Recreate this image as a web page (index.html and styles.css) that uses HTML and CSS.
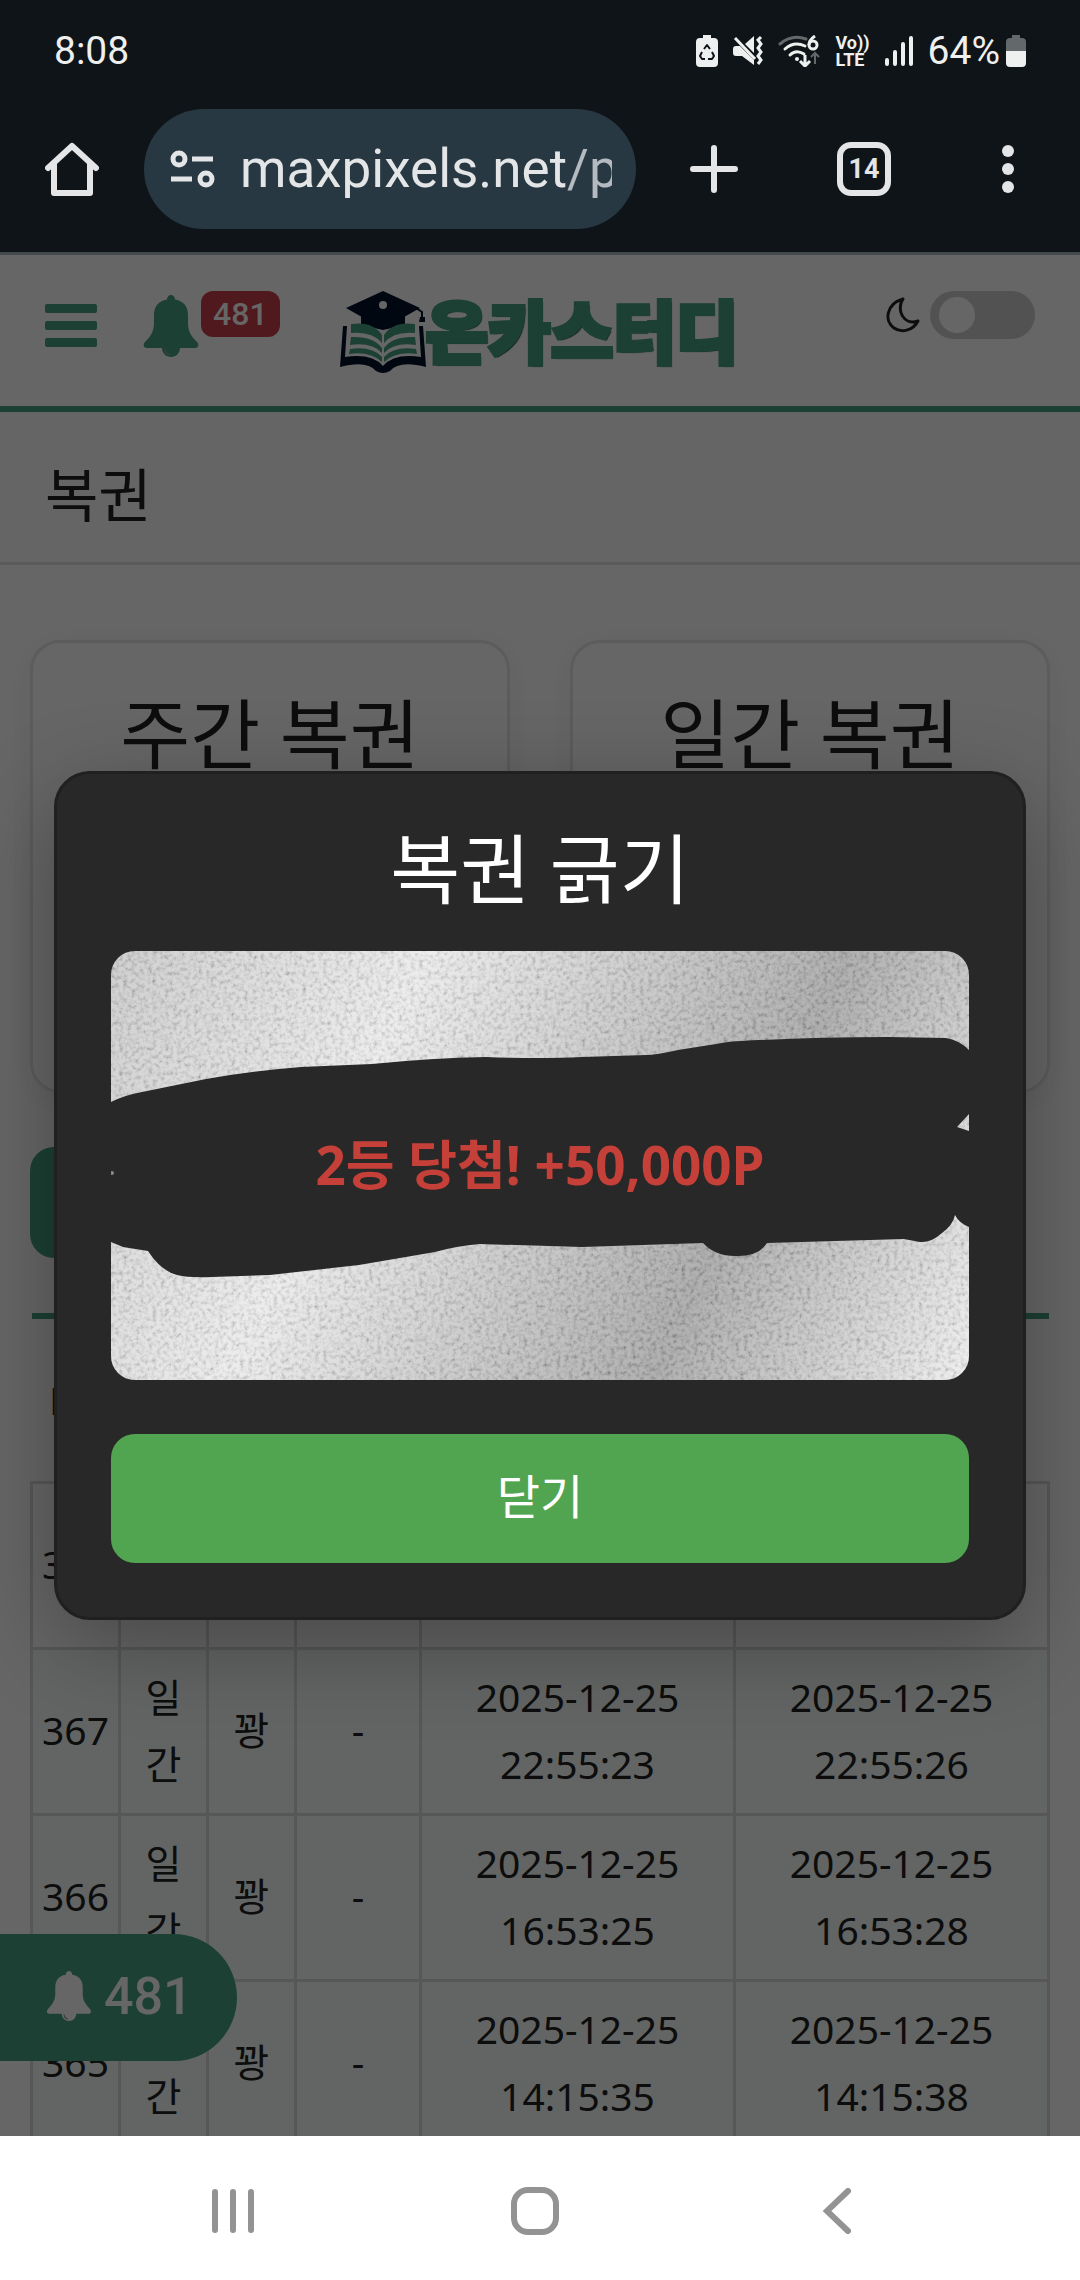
FILE: index.html
```html
<!DOCTYPE html>
<html lang="ko">
<head>
    <meta charset="UTF-8">
    <meta name="viewport" content="width=device-width, initial-scale=1.0">
    <title>복권</title>
    <link rel="stylesheet" href="styles.css">
</head>
<body>
    <svg class="sprite" aria-hidden="true">
        <symbol id="bell" viewBox="0 0 56 62">
            <path fill="currentColor" d="M28 0c2 0 4 1.500 4 4.500C41 6 45 12 45 20v8c0 9 4 14 9 19 2 2 2 6-2 6H37c0 5-4 9-9 9s-9-4-9-9H4c-4 0-4-4-2-6 5-5 9-10 9-19v-8c0-8 4-14 13-15.500C24 1.500 26 0 28 0z"/>
            <path class="bell-shine" d="M22 54c0 3 2 5 5 5.500" fill="none" stroke-width="1.500"/>
        </symbol>
    </svg>

    <!-- phone status bar -->
    <div class="status-bar">
        <span class="clock">8:08</span>
        <div class="status-icons">
            <svg width="22" height="32" viewBox="0 0 22 32">
                <path fill="#eef0ef" d="M7 0h8v3h3a4 4 0 0 1 4 4v21a4 4 0 0 1-4 4H4a4 4 0 0 1-4-4V7a4 4 0 0 1 4-4h3z"/>
                <path d="M8 14l3-4 3 4M16 17l2 4-2 3h-4M9 24H6l-2-3 2-4" fill="none" stroke="#0f1418" stroke-width="2" stroke-linejoin="round"/>
            </svg>
            <svg width="30" height="32" viewBox="0 0 30 32">
                <path fill="#eef0ef" d="M0 14q0-3 3-3h4l14 14v5L9 21H3q-3 0-3-3zM12 9l9-8v17z"/>
                <path d="M2 3l20 21M28 2l-3 3 3 4-3 4 3 4-3 4 3 4-3 4" fill="none" stroke="#eef0ef" stroke-width="3"/>
            </svg>
            <svg width="42" height="32" viewBox="0 0 42 32" fill="none">
                <path d="M2 9Q14-1 28 4" stroke="#63686b" stroke-width="3" stroke-linecap="round"/>
                <path d="M7 14q9-8 20-3M12 20q6-6 14-1" stroke="#eef0ef" stroke-width="3" stroke-linecap="round"/>
                <circle cx="19" cy="24" r="2" fill="#eef0ef"/>
                <path d="M27 20v10M22 26l5 5 5-5" stroke="#eef0ef" stroke-width="3"/>
                <path d="M37 29V18M33 22l4-4 4 4" stroke="#63686b" stroke-width="2"/>
                <path d="M37 1q-6 4-6 9" stroke="#eef0ef" stroke-width="3"/>
                <circle cx="35" cy="10" r="4" stroke="#eef0ef" stroke-width="3"/>
            </svg>
            <span class="volte">Vo))<br>LTE</span>
            <svg width="28" height="30" viewBox="0 0 28 30">
                <path d="M2 24v4M10 16v12M18 8v20M26 2v26" stroke="#eef0ef" stroke-width="4" stroke-linecap="round"/>
            </svg>
            <span class="percent">64%</span>
            <svg class="battery" width="20" height="32" viewBox="0 0 20 32">
                <path fill="#63686b" d="M6 0h8v3h2a4 4 0 0 1 4 4v9H0V7a4 4 0 0 1 4-4h2z"/>
                <path fill="#eef0ef" d="M0 16h20v12a4 4 0 0 1-4 4H4a4 4 0 0 1-4-4z"/>
            </svg>
        </div>
    </div>

    <!-- browser toolbar -->
    <nav class="toolbar">
        <button class="tool-btn" aria-label="홈">
            <svg width="54" height="54" viewBox="0 0 54 54" fill="none" stroke="#e3e5e7" stroke-width="6" stroke-linejoin="round" stroke-linecap="round">
                <path d="M3 26L27 4l24 22M9 22v29h36V22"/>
            </svg>
        </button>
        <div class="address">
            <svg width="46" height="38" viewBox="0 0 46 38" fill="none" stroke="#e3e5e7" stroke-width="5">
                <circle cx="9" cy="9" r="6"/><path d="M22 9h21M1 29h21"/><circle cx="36" cy="29" r="6"/>
            </svg>
            <a href="#" class="url">maxpixels.net<span>/p</span></a>
        </div>
        <button class="tool-btn plus" aria-label="새 탭">
            <svg width="48" height="48" viewBox="0 0 48 48" stroke="#e3e5e7" stroke-width="6" stroke-linecap="round">
                <path d="M24 3v42M3 24h42"/>
            </svg>
        </button>
        <button class="tool-btn tabs">14</button>
        <button class="tool-btn more" aria-label="메뉴">
            <svg width="12" height="48" viewBox="0 0 12 48" fill="#e3e5e7">
                <circle cx="6" cy="6" r="6"/><circle cx="6" cy="24" r="6"/><circle cx="6" cy="42" r="6"/>
            </svg>
        </button>
    </nav>

    <div class="page">
        <header class="site-header">
            <button class="menu-btn" aria-label="메뉴 열기"><i></i><i></i><i></i></button>
            <a href="#" class="alarm" aria-label="알림">
                <svg class="bell" width="56" height="62"><use href="#bell"/></svg>
                <span class="badge">481</span>
            </a>
            <a href="#" class="logo">
                <svg width="86" height="82" viewBox="0 0 86 82">
                    <path fill="#001228" d="M6 17L43 0l37 17-37 21zM21 24l22 12 22-12v10L43 39 21 34z"/>
                    <path d="M76 17l6 4v8" fill="none" stroke="#001228" stroke-width="2"/>
                    <path fill="#001228" d="M80 26h5v5h-6zM3 35h4L5 66q27-4 38 9 11-13 38-9l-2-31h4l3 41q-27-7-36 4-7 4-14 0Q27 69 0 76z"/>
                    <circle cx="43" cy="14" r="4" fill="#fff"/>
                    <g fill="#46a080">
                        <path d="M11 33q22-3 31 11v8Q32 40 11 42z"/>
                        <path d="M11 46q22-1 31 11v5Q32 51 10 54z"/>
                        <path d="M10 58q22-3 32 8v5Q30 60 9 63z"/>
                        <path d="M75 33q-22-3-31 11v8q10-12 31-10z"/>
                        <path d="M75 46q-22-1-31 11v5q10-11 32-8z"/>
                        <path d="M76 58q-22-3-32 8v5q12-11 33-8z"/>
                    </g>
                </svg>
                <span>온카스터디</span>
            </a>
            <div class="theme">
                <svg width="34" height="36" viewBox="0 0 34 36" fill="none" stroke="#222" stroke-width="3" stroke-linejoin="round">
                    <path d="M17 2C10 12 17 29 32 24 27 34 15 36 8 31-2 24 0 7 17 2z"/>
                </svg>
                <input type="checkbox" class="switch" aria-label="다크 모드">
            </div>
        </header>

        <h2 class="page-title">복권</h2>

        <main>
            <div class="cards">
                <section class="card"><h3>주간 복권</h3></section>
                <section class="card"><h3>일간 복권</h3></section>
            </div>
            <button class="filter-btn" aria-label="기록"></button>
            <table>
                <colgroup>
                    <col class="c-s"><col class="c-s"><col class="c-s"><col class="c-m"><col class="c-l"><col class="c-l">
                </colgroup>
                <thead>
                    <tr><th>No</th><th></th><th></th><th></th><th></th><th></th></tr>
                </thead>
                <tbody>
                    <tr class="win">
                        <td>368</td><td></td><td></td><td></td><td></td><td></td>
                    </tr>
                    <tr>
                        <td>367</td><td>일간</td><td>꽝</td><td>-</td>
                        <td>2025-12-25 22:55:23</td><td>2025-12-25 22:55:26</td>
                    </tr>
                    <tr>
                        <td>366</td><td>일간</td><td>꽝</td><td>-</td>
                        <td>2025-12-25 16:53:25</td><td>2025-12-25 16:53:28</td>
                    </tr>
                    <tr>
                        <td>365</td><td>일간</td><td>꽝</td><td>-</td>
                        <td>2025-12-25 14:15:35</td><td>2025-12-25 14:15:38</td>
                    </tr>
                </tbody>
            </table>
        </main>

        <a href="#" class="float-alarm">
            <svg class="bell" width="46" height="50"><use href="#bell"/></svg>
            <span>481</span>
        </a>

        <div class="overlay">
            <div class="modal" role="dialog" aria-labelledby="scratchTitle">
                <h2 id="scratchTitle">복권 긁기</h2>
                <div class="scratch">
                    <svg viewBox="0 0 858 429" preserveAspectRatio="none" aria-hidden="true">
                        <defs>
                            <linearGradient id="silver" gradientUnits="userSpaceOnUse" x1="0" y1="0" x2="871" y2="402">
                                <stop offset="0" stop-color="#bdbdbd"/>
                                <stop offset="0.3" stop-color="#e6e6e6"/>
                                <stop offset="0.7" stop-color="#929292"/>
                                <stop offset="1" stop-color="#eaeaea"/>
                            </linearGradient>
                            <filter id="grain" x="0" y="0" width="1" height="1">
                                <feTurbulence type="fractalNoise" baseFrequency="0.24" numOctaves="3" seed="4"/>
                                <feColorMatrix values="2 0 0 0 -0.22  2 0 0 0 -0.22  2 0 0 0 -0.22  0 0 0 0 0.28"/>
                            </filter>
                        </defs>
                        <rect width="858" height="429" fill="url(#silver)"/>
                        <rect width="858" height="429" filter="url(#grain)"/>
                        <!-- scratched area -->
                        <path fill="#282828" d="M0 151Q14 144 31 141L95 128Q140 120 190 116L261 113Q320 107 375 106Q430 108 471 106L535 104Q545 104 567 99L605 93Q620 90 630 90Q700 86 777 86L835 87Q848 89 858 99V163L846 176L858 180V276Q848 272 844 264Q842 274 831 282Q820 292 809 291L793 288L656 292Q648 305 627 305Q605 306 592 292L471 296L369 293Q345 295 324 301L248 314L159 324L101 326Q78 327 66 324Q50 320 37 300L12 296L0 291Z"/>
                        <circle cx="1" cy="222" r="2" fill="#888"/>
                    </svg>
                    <strong>2등 당첨! +50,000P</strong>
                </div>
                <button class="close-btn">닫기</button>
            </div>
        </div>
    </div>

    <!-- system navigation -->
    <nav class="nav-bar">
        <button aria-label="최근 앱">
            <svg width="42" height="46" viewBox="0 0 42 46" stroke="#939393" stroke-width="6" stroke-linecap="round"><path d="M3 4v38M21 4v38M39 4v38"/></svg>
        </button>
        <button aria-label="홈 화면">
            <svg width="48" height="48" viewBox="0 0 48 48" fill="none" stroke="#939393" stroke-width="6"><rect x="3" y="3" width="42" height="42" rx="14"/></svg>
        </button>
        <button aria-label="뒤로">
            <svg width="46" height="46" viewBox="0 0 46 46" fill="none" stroke="#939393" stroke-width="6" stroke-linecap="round"><path d="M34 3L13 23l21 20"/></svg>
        </button>
    </nav>
</body>
</html>
```

FILE: styles.css
```css
* {
    box-sizing: border-box;
}
body {
    margin: 0;
    height: 100vh;
    display: flex;
    flex-direction: column;
    overflow: hidden;
    background: #0f1418;
    color: #222;
    font-family: "Noto Sans", "Noto Sans CJK KR", sans-serif;
    font-size: 39px;
}
button {
    border: none;
    padding: 0;
    background: none;
    font-family: inherit;
    cursor: pointer;
}
a {
    color: inherit;
    text-decoration: none;
}
svg {
    display: block;
    flex-shrink: 0;
}
h2, h3 {
    margin: 0;
    font-weight: 400;
}
.sprite {
    position: absolute;
    width: 0;
    height: 0;
}

/* Status bar */
.status-bar {
    display: flex;
    justify-content: space-between;
    align-items: center;
    height: 102px;
    padding: 0 54px;
    color: #eef0ef;
    font-family: Roboto, sans-serif;
    font-size: 39px;
}
.status-icons {
    display: flex;
    align-items: center;
    gap: 15px;
}
.volte {
    font-size: 18px;
    line-height: 17px;
    font-weight: 700;
}
.battery {
    margin-left: -9px;
}

/* Browser toolbar */
.toolbar {
    display: flex;
    align-items: center;
    height: 153px;
    padding: 0 66px 17px 45px;
    border-bottom: 3px solid #434a4d;
    flex-shrink: 0;
}
.address {
    flex: 1;
    display: flex;
    align-items: center;
    gap: 24px;
    height: 120px;
    margin: 0 54px 0 45px;
    padding: 0 24px 0 26px;
    border-radius: 60px;
    background: #273843;
    overflow: hidden;
}
.url {
    flex: 1;
    overflow: hidden;
    white-space: nowrap;
    color: #e3e5e7;
    font-family: Roboto, sans-serif;
    font-size: 53px;
}
.url span {
    color: #b4babf;
}
.tabs {
    width: 54px;
    height: 54px;
    margin: 0 111px 0 99px;
    border: 6px solid #e3e5e7;
    border-radius: 14px;
    color: #e3e5e7;
    font-family: Roboto, sans-serif;
    font-size: 27px;
    font-weight: 700;
}

/* Site */
.page {
    position: relative;
    flex: 1;
    min-height: 0;
    overflow: hidden;
    background: #fff;
}
.site-header {
    position: relative;
    display: flex;
    align-items: flex-start;
    height: 157px;
    padding: 36px 45px 0;
    border-bottom: 6px solid #46a080;
}
.menu-btn {
    display: flex;
    flex-direction: column;
    gap: 8px;
    width: 52px;
    margin-top: 13px;
}
.menu-btn i {
    height: 9px;
    border-radius: 2px;
    background: #46a080;
}
.alarm {
    display: flex;
    align-items: flex-start;
    gap: 2px;
    margin-left: 46px;
}
.bell {
    color: #46a080;
}
.alarm .bell {
    margin-top: 4px;
}
.bell-shine {
    stroke: #999;
}
.badge {
    padding: 0 12px;
    border-radius: 12px;
    background: #c93f4a;
    color: #fff;
    font-family: Roboto, sans-serif;
    font-size: 32px;
    line-height: 46px;
    font-weight: 500;
}
.logo {
    display: flex;
    align-items: flex-start;
    margin-left: 60px;
}
.logo span {
    color: #46a080;
    font-family: "Noto Sans CJK KR", sans-serif;
    font-size: 68px;
    line-height: 76px;
    font-weight: 900;
    -webkit-text-stroke: 4px #46a080;
    text-shadow: 2px 2px 1px #1c5038;
}
.theme {
    display: flex;
    align-items: center;
    gap: 10px;
    margin-left: auto;
}
.switch {
    appearance: none;
    width: 105px;
    height: 48px;
    margin: 0;
    padding: 6px 9px;
    border-radius: 24px;
    background: #cdcdcd;
}
.switch::before {
    content: "";
    display: block;
    width: 36px;
    height: 36px;
    border-radius: 50%;
    background: #fff;
}
.page-title {
    padding: 15px 45px 0;
    border-bottom: 3px solid #e2e2e2;
    background: #fcfcfc;
    font-size: 58px;
    line-height: 135px;
}
main {
    padding: 75px 30px 0;
}
.cards {
    display: grid;
    grid-template-columns: 1fr 1fr;
    gap: 60px;
    margin-bottom: 54px;
}
.card {
    height: 453px;
    padding-top: 46px;
    border: 3px solid #e6e6e6;
    border-radius: 30px;
    box-shadow: 0 6px 30px rgba(0, 0, 0, 0.06);
    text-align: center;
}
.card h3, .modal h2 {
    font-size: 76px;
    line-height: 90px;
}
.filter-btn {
    display: block;
    width: 300px;
    height: 111px;
    margin-bottom: 55px;
    border-radius: 24px;
    background: #46a080;
}
table {
    width: 100%;
    table-layout: fixed;
    border-collapse: collapse;
    line-height: 67px;
    text-align: center;
}
.c-s {
    width: 88px;
}
.c-m {
    width: 125px;
}
thead {
    border-top: 6px solid #46a080;
}
th {
    height: 166px;
    padding: 0;
    font-weight: 400;
}
td {
    height: 166px;
    padding: 13px 24px 16px;
    border: 3px solid #dadada;
    background: #f4fcf8;
}
td:first-child {
    padding-left: 0;
    padding-right: 0;
}
.win td {
    background: #fff;
}
.float-alarm {
    position: absolute;
    left: 0;
    bottom: 75px;
    display: flex;
    align-items: center;
    gap: 12px;
    height: 127px;
    padding: 0 44px 3px 46px;
    border-radius: 0 64px 64px 0;
    background: #46a080;
    color: #fff;
    font-family: Roboto, sans-serif;
    font-size: 52px;
    font-weight: 500;
}
.float-alarm .bell {
    color: #fff;
}

/* Scratch popup */
.overlay {
    position: absolute;
    inset: 0;
    display: flex;
    align-items: center;
    justify-content: center;
    background: rgba(0, 0, 0, 0.6);
}
.modal {
    width: 90%;
    padding: 50px 54px 54px;
    border: 3px solid #202020;
    border-radius: 36px;
    background: #282828;
    box-shadow: 0 24px 90px rgba(0, 0, 0, 0.3);
    color: #fff;
    text-align: center;
}
.modal h2 {
    margin-bottom: 37px;
}
.scratch {
    position: relative;
    aspect-ratio: 2;
    border-radius: 24px;
    overflow: hidden;
}
.scratch svg {
    width: 100%;
    height: 100%;
}
.scratch strong {
    position: absolute;
    inset: 0;
    display: flex;
    align-items: center;
    justify-content: center;
    padding-bottom: 6px;
    color: #c44038;
    font-size: 53px;
}
.close-btn {
    width: 100%;
    height: 129px;
    margin-top: 54px;
    padding-bottom: 10px;
    border-radius: 24px;
    background: #52a550;
    color: #fff;
    font-size: 47px;
}

/* System navigation */
.nav-bar {
    display: flex;
    align-items: center;
    height: 144px;
    padding: 6px 92px 0 82px;
    background: #fff;
    flex-shrink: 0;
}
.nav-bar button {
    flex: 1;
    display: flex;
    justify-content: center;
}
```
